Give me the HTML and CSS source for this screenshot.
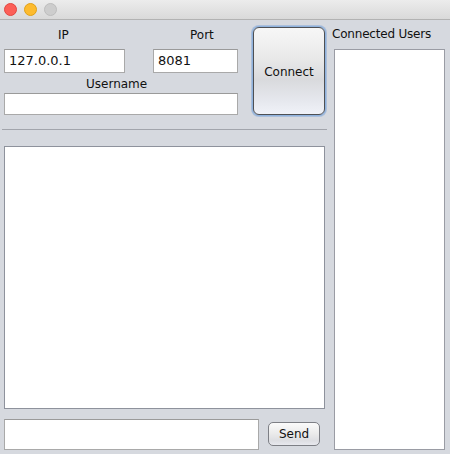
FILE: index.html
```
<!DOCTYPE html>
<html>
<head>
<meta charset="utf-8">
<link rel="stylesheet" href="styles.css">
</head>
<body>
<div class="window">
  <div class="titlebar">
    <span class="light red"></span>
    <span class="light yellow"></span>
    <span class="light gray"></span>
  </div>
  <div class="content">
    <div class="left">
      <div class="top">
        <div class="form">
          <div class="label ip-label">IP</div>
          <div class="label port-label">Port</div>
          <div class="field ip-field">127.0.0.1</div>
          <div class="field port-field">8081</div>
          <div class="label user-label">Username</div>
          <div class="field user-field"></div>
        </div>
        <div class="connect">Connect</div>
      </div>
      <div class="sep"></div>
      <div class="chat"></div>
      <div class="bottom">
        <div class="field msg-field"></div>
        <div class="send">Send</div>
      </div>
    </div>
    <div class="right">
      <div class="users-label">Connected Users</div>
      <div class="users"></div>
    </div>
  </div>
</div>
</body>
</html>
```

FILE: styles.css
```
* { box-sizing: border-box; }
html, body {
  margin: 0;
  padding: 0;
  background: #d6d9df;
}
.window {
  width: 450px;
  height: 454px;
  background: #d6d9df;
  font-family: "DejaVu Sans", sans-serif;
  font-size: 12px;
  color: #111;
  overflow: hidden;
}
.titlebar {
  height: 20px;
  background: linear-gradient(#ececec, #d9d9d9);
  border-bottom: 1px solid #b2b2b2;
  display: flex;
  align-items: center;
  gap: 7px;
  padding-left: 4px;
  padding-bottom: 1px;
}
.light {
  width: 13px;
  height: 13px;
  border-radius: 50%;
  display: block;
}
.red { background: #fc5f57; border: 1px solid #e2463f; }
.yellow { background: #fdbb2e; border: 1px solid #e1a116; }
.gray { background: #cdcdcd; border: 1px solid #bdbdbd; }
.content {
  display: flex;
}
.left {
  width: 330px;
}
.top {
  display: flex;
  margin-top: 7px;
  padding-left: 4px;
}
.form {
  display: grid;
  grid-template-columns: 121px 85px;
  column-gap: 28px;
  width: 234px;
}
.label {
  line-height: 16px;
  height: 16px;
}
.ip-label { padding-left: 54px; }
.port-label { padding-left: 37px; }
.user-label {
  grid-column: 1 / 3;
  margin-top: 3px;
  padding-left: 82px;
}
.field {
  background: #fff;
  border: 1px solid #a9a9a9;
  border-top-color: #9a9a9a;
  font-size: 13px;
  line-height: 22px;
  padding-left: 4px;
  color: #111;
}
.ip-field, .port-field {
  margin-top: 6px;
  height: 24px;
}
.user-field {
  grid-column: 1 / 3;
  margin-top: 1px;
  height: 22px;
}
.connect {
  margin-left: 15px;
  width: 72px;
  height: 88px;
  border-radius: 6px;
  border: 1px solid #4e5054;
  box-shadow: 0 0 0 1px #8fb2dd, 0 0 0 2px rgba(120,160,215,0.45);
  background: linear-gradient(#f7f7f7 0%, #e9e9e9 35%, #d9dadd 60%, #e6e8ee 85%, #f0f2f8 100%);
  display: flex;
  align-items: center;
  justify-content: center;
  padding-top: 2px;
  font-size: 12px;
  color: #111;
}
.sep {
  margin-top: 14px;
  margin-left: 2px;
  width: 325px;
  height: 1px;
  background: #a2a5ac;
}
.chat {
  margin-top: 16px;
  margin-left: 4px;
  width: 321px;
  height: 263px;
  background: #fff;
  border: 1px solid #8e929c;
}
.bottom {
  display: flex;
  align-items: center;
  margin-top: 10px;
  margin-left: 4px;
}
.msg-field {
  width: 255px;
  height: 31px;
}
.send {
  margin-left: 9px;
  width: 52px;
  height: 24px;
  border-radius: 5px;
  border: 1px solid #7d7f85;
  background: linear-gradient(#fbfbfb, #eaeaea 50%, #dddee2 80%, #e8e9ee);
  display: flex;
  align-items: center;
  justify-content: center;
  font-size: 12px;
  color: #111;
  margin-top: -2px;
}
.right {
  width: 120px;
  padding-left: 2px;
}
.users-label {
  margin-top: 6px;
  line-height: 16px;
  height: 16px;
  letter-spacing: -0.2px;
}
.users {
  margin-top: 7px;
  margin-left: 2px;
  width: 111px;
  height: 401px;
  background: #fff;
  border: 1px solid #9a9ca4;
}
```
